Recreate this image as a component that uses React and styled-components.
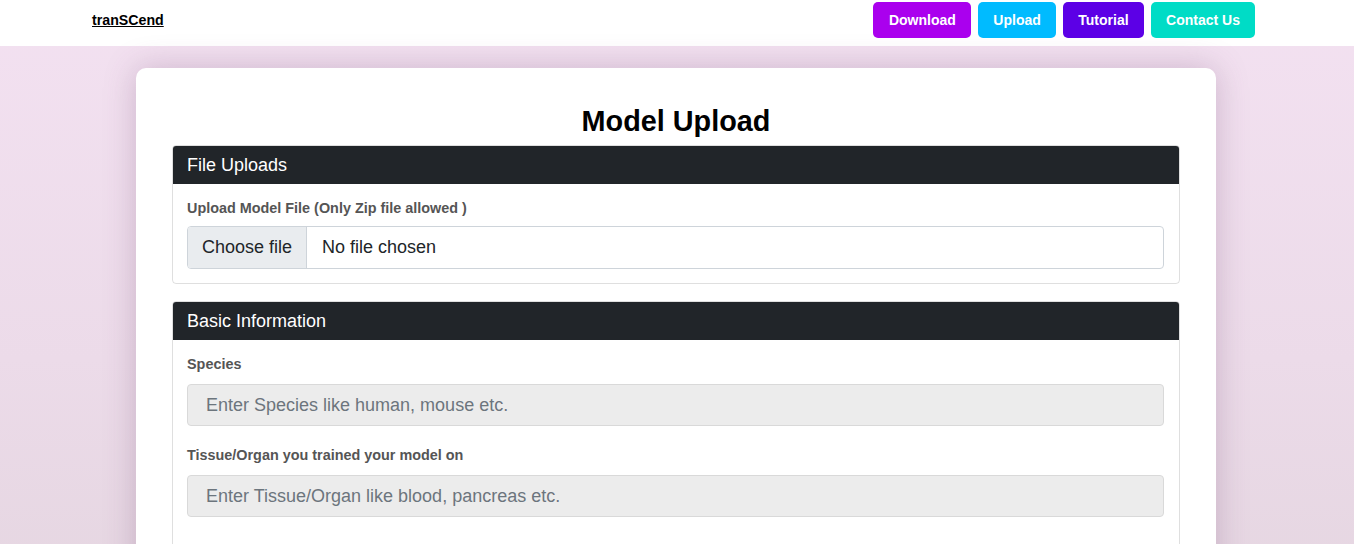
import React from 'react'
import styled, { createGlobalStyle } from 'styled-components'

const GlobalStyle = createGlobalStyle`
  *, *::before, *::after { box-sizing: border-box; }
  html, body { margin: 0; padding: 0; }
  body {
    font-family: "Liberation Sans", Arial, sans-serif;
    color: #212529;
    overflow: hidden;
    background: linear-gradient(180deg, #f3e1f1 0%, #ecdbe9 60%, #e5d6e1 100%);
    min-height: 544px;
  }
`

const Nav = styled.nav`
  height: 46px;
  background: #fff;
  display: flex;
  align-items: center;
  justify-content: space-between;
  padding: 2px 99px 8px 92px;
`

const Brand = styled.a`
  font-size: 14.2px;
  font-weight: 700;
  color: #000;
  text-decoration: underline;
`

const NavLinks = styled.div`
  display: flex;
  gap: 7px;
`

const NavButton = styled.a`
  display: inline-block;
  padding: 10px 15px 10px 15.5px;
  line-height: 16px;
  font-size: 14px;
  font-weight: 700;
  color: #fff;
  background: ${(p) => p.$bg};
  border-radius: 5px;
  text-decoration: none;
`

const Main = styled.main`
  padding: 22px 2px 0 0;
`

const Card = styled.div`
  width: 1080px;
  margin: 0 auto;
  background: #fff;
  border-radius: 10px;
  padding: 36px 36px 40px;
  box-shadow: 0 0 32px rgba(110, 70, 110, 0.28);
`

const Title = styled.h2`
  margin: 0 0 6px;
  text-align: center;
  font-size: 28.8px;
  line-height: 35px;
  font-weight: 700;
  color: #000;
`

const Section = styled.section`
  border: 1px solid rgba(0, 0, 0, 0.125);
  border-radius: 4px;
  overflow: hidden;
  & + & {
    margin-top: 17px;
  }
`

const SectionHeader = styled.div`
  background: #212529;
  color: #fff;
  font-size: 18px;
  line-height: 28px;
  padding: 5px 14px;
`

const SectionBody = styled.div`
  padding: 14px 15px ${(p) => p.$bottom || 14}px 14px;
`

const Group = styled.div`
  & + & {
    margin-top: 19px;
  }
`

const Label = styled.label`
  display: block;
  font-size: 14.4px;
  line-height: 20px;
  font-weight: 700;
  color: #555;
  margin-bottom: ${(p) => p.$gap || 10}px;
`

const FileBox = styled.div`
  display: flex;
  height: 43px;
  border: 1px solid #ced4da;
  border-radius: 4px;
  overflow: hidden;
  font-size: 18px;
  color: #212529;
`

const FileButton = styled.span`
  display: flex;
  align-items: center;
  flex-shrink: 0;
  white-space: nowrap;
  padding: 0 14px;
  background: #e9ecef;
  border-right: 1px solid #ced4da;
`

const FileName = styled.span`
  display: flex;
  align-items: center;
  white-space: nowrap;
  padding: 0 15px;
`

const TextInput = styled.input`
  display: block;
  width: 100%;
  height: 42px;
  padding: 0 18px;
  font-family: inherit;
  font-size: 18px;
  color: #212529;
  background: #ececec;
  border: 1px solid #d9d9d9;
  border-radius: 4px;
  outline: none;
  &::placeholder {
    color: #6c757d;
  }
`

const links = [
  { label: 'Download', bg: '#aa00ee' },
  { label: 'Upload', bg: '#00bbff' },
  { label: 'Tutorial', bg: '#5c00e6' },
  { label: 'Contact Us', bg: '#00dcc6' },
]

const App = () => {
  return (
    <>
      <GlobalStyle />
      <Nav>
        <Brand href="#">tranSCend</Brand>
        <NavLinks>
          {links.map((l) => (
            <NavButton key={l.label} href="#" $bg={l.bg}>
              {l.label}
            </NavButton>
          ))}
        </NavLinks>
      </Nav>
      <Main>
        <Card>
          <Title>Model Upload</Title>
          <Section>
            <SectionHeader>File Uploads</SectionHeader>
            <SectionBody>
              <Group>
                <Label $gap={8}>Upload Model File (Only Zip file allowed )</Label>
                <FileBox>
                  <FileButton>Choose file</FileButton>
                  <FileName>No file chosen</FileName>
                </FileBox>
              </Group>
            </SectionBody>
          </Section>
          <Section>
            <SectionHeader>Basic Information</SectionHeader>
            <SectionBody $bottom={40}>
              <Group>
                <Label>Species</Label>
                <TextInput placeholder="Enter Species like human, mouse etc." />
              </Group>
              <Group>
                <Label>Tissue/Organ you trained your model on</Label>
                <TextInput placeholder="Enter Tissue/Organ like blood, pancreas etc." />
              </Group>
            </SectionBody>
          </Section>
        </Card>
      </Main>
    </>
  )
}

export default App
